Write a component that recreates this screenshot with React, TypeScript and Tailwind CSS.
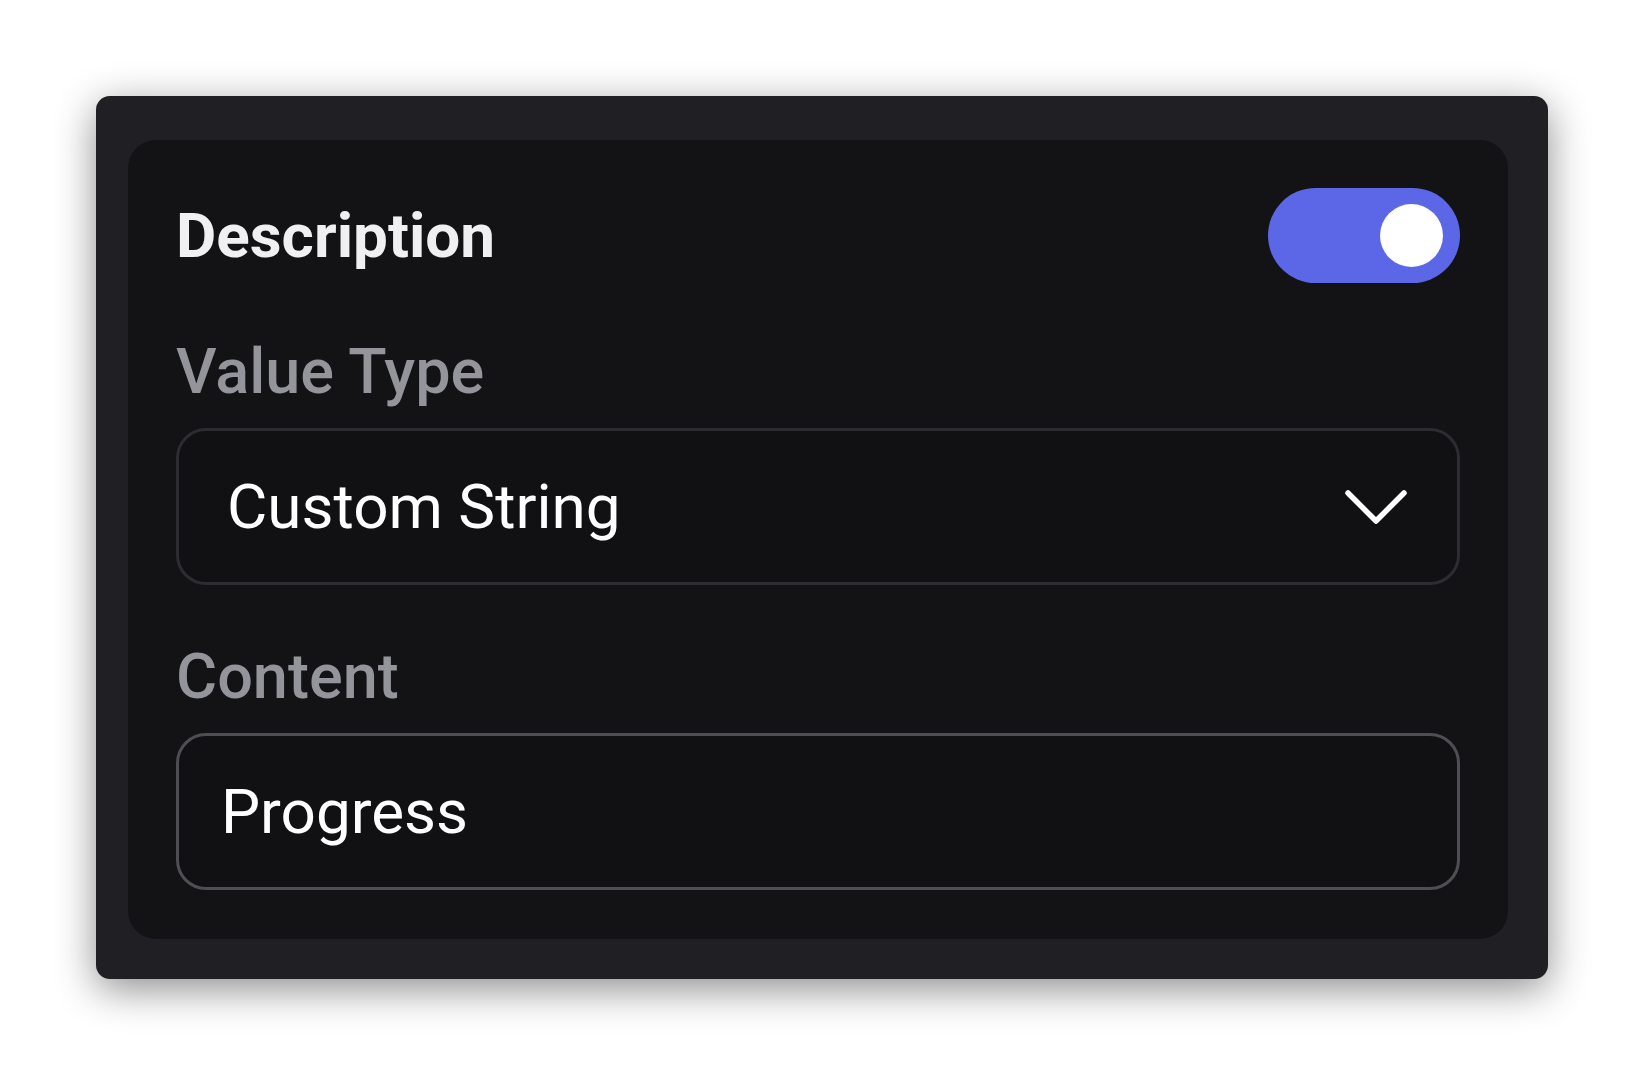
import { useState } from 'react';

const FONT = 'Roboto, "Noto Sans", Arial, sans-serif';

function Toggle({ on, onChange }: { on: boolean; onChange: (v: boolean) => void }) {
  return (
    <button
      onClick={() => onChange(!on)}
      className={`flex items-center w-[192px] h-[95px] rounded-full px-[17px] ${
        on ? 'bg-[#5b67e6] justify-end' : 'bg-[#4e5058] justify-start'
      }`}
    >
      <span className="block w-[63px] h-[63px] rounded-full bg-white" />
    </button>
  );
}

export default function App() {
  const [enabled, setEnabled] = useState(true);
  const [content, setContent] = useState('Progress');

  return (
    <div className="w-full h-screen bg-white p-[96px]" style={{ fontFamily: FONT }}>
      <div className="h-[883px] bg-[#202024] rounded-[14px] pl-8 pr-10 pt-11 pb-10 shadow-[0_10px_40px_rgba(0,0,0,0.45)]">
        <div className="h-full bg-[#131316] rounded-[28px] px-12 pt-12 pb-12">
          <div className="flex items-center justify-between h-[95px]">
            <h2 className="text-[62px] leading-[80px] font-bold text-[#f0f0f2]">Description</h2>
            <Toggle on={enabled} onChange={setEnabled} />
          </div>

          <label className="block mt-[49px] text-[63px] leading-[80px] font-medium text-[#94949b]">
            Value Type
          </label>
          <div className="mt-4 h-[157px] flex items-center justify-between border-[3px] border-[#2c2c31] rounded-[30px] pl-[48px] pr-[50px] bg-[#111114]">
            <span className="text-[62px] leading-[80px] text-white">Custom String</span>
            <svg width="62" height="36" viewBox="0 0 62 36" fill="none">
              <polyline points="3,4 31,32 59,4" stroke="white" strokeWidth="5.5" strokeLinecap="round" strokeLinejoin="round" />
            </svg>
          </div>

          <label className="block mt-[52px] text-[63px] leading-[80px] font-medium text-[#94949b]">
            Content
          </label>
          <input
            value={content}
            onChange={(e) => setContent(e.target.value)}
            className="mt-4 w-full h-[157px] border-[3px] border-[#4e4e53] rounded-[30px] px-[42px] bg-[#111114] text-[62px] text-white outline-none"
            style={{ fontFamily: FONT }}
          />
        </div>
      </div>
    </div>
  );
}
